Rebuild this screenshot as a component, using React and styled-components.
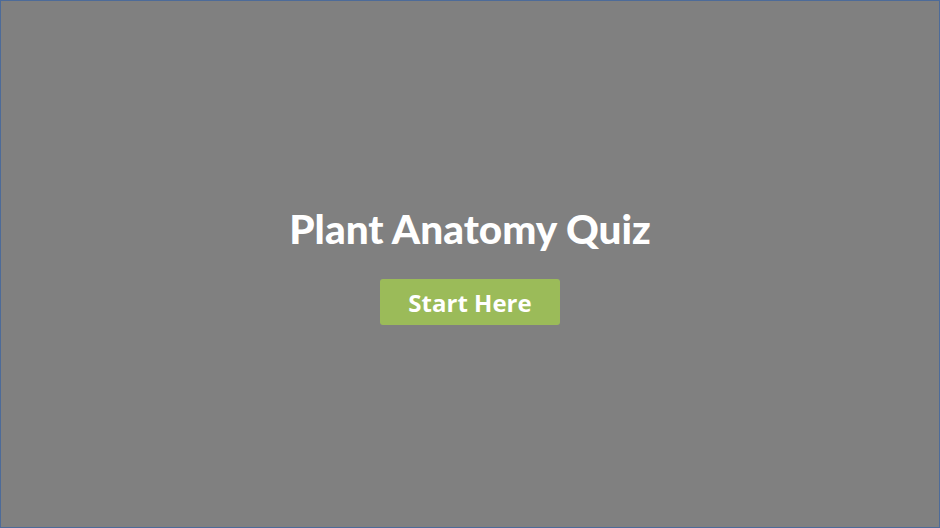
import React from 'react'
import styled, { createGlobalStyle } from 'styled-components'

const GlobalStyle = createGlobalStyle`
  html, body {
    margin: 0;
    padding: 0;
  }
`

const Stage = styled.div`
  box-sizing: border-box;
  width: 940px;
  height: 528px;
  background: #808080;
  border: 1px solid #4d6b99;
  display: flex;
  flex-direction: column;
  align-items: center;
  justify-content: center;
  padding-top: 2px;
`

const Title = styled.h1`
  margin: 0 0 26px;
  font-family: Lato, "Liberation Sans", sans-serif;
  font-weight: 900;
  font-size: 40.5px;
  line-height: 1.2;
  color: #ffffff;
`

const StartButton = styled.button`
  width: 180px;
  height: 46px;
  border: none;
  border-radius: 3px;
  background: #9bbb59;
  color: #ffffff;
  font-family: "Open Sans", "Liberation Sans", sans-serif;
  font-weight: 700;
  font-size: 24px;
  cursor: pointer;
`

const App = () => {
  return (
    <>
      <GlobalStyle />
      <Stage>
        <Title>Plant Anatomy Quiz</Title>
        <StartButton>Start Here</StartButton>
      </Stage>
    </>
  )
}

export default App
